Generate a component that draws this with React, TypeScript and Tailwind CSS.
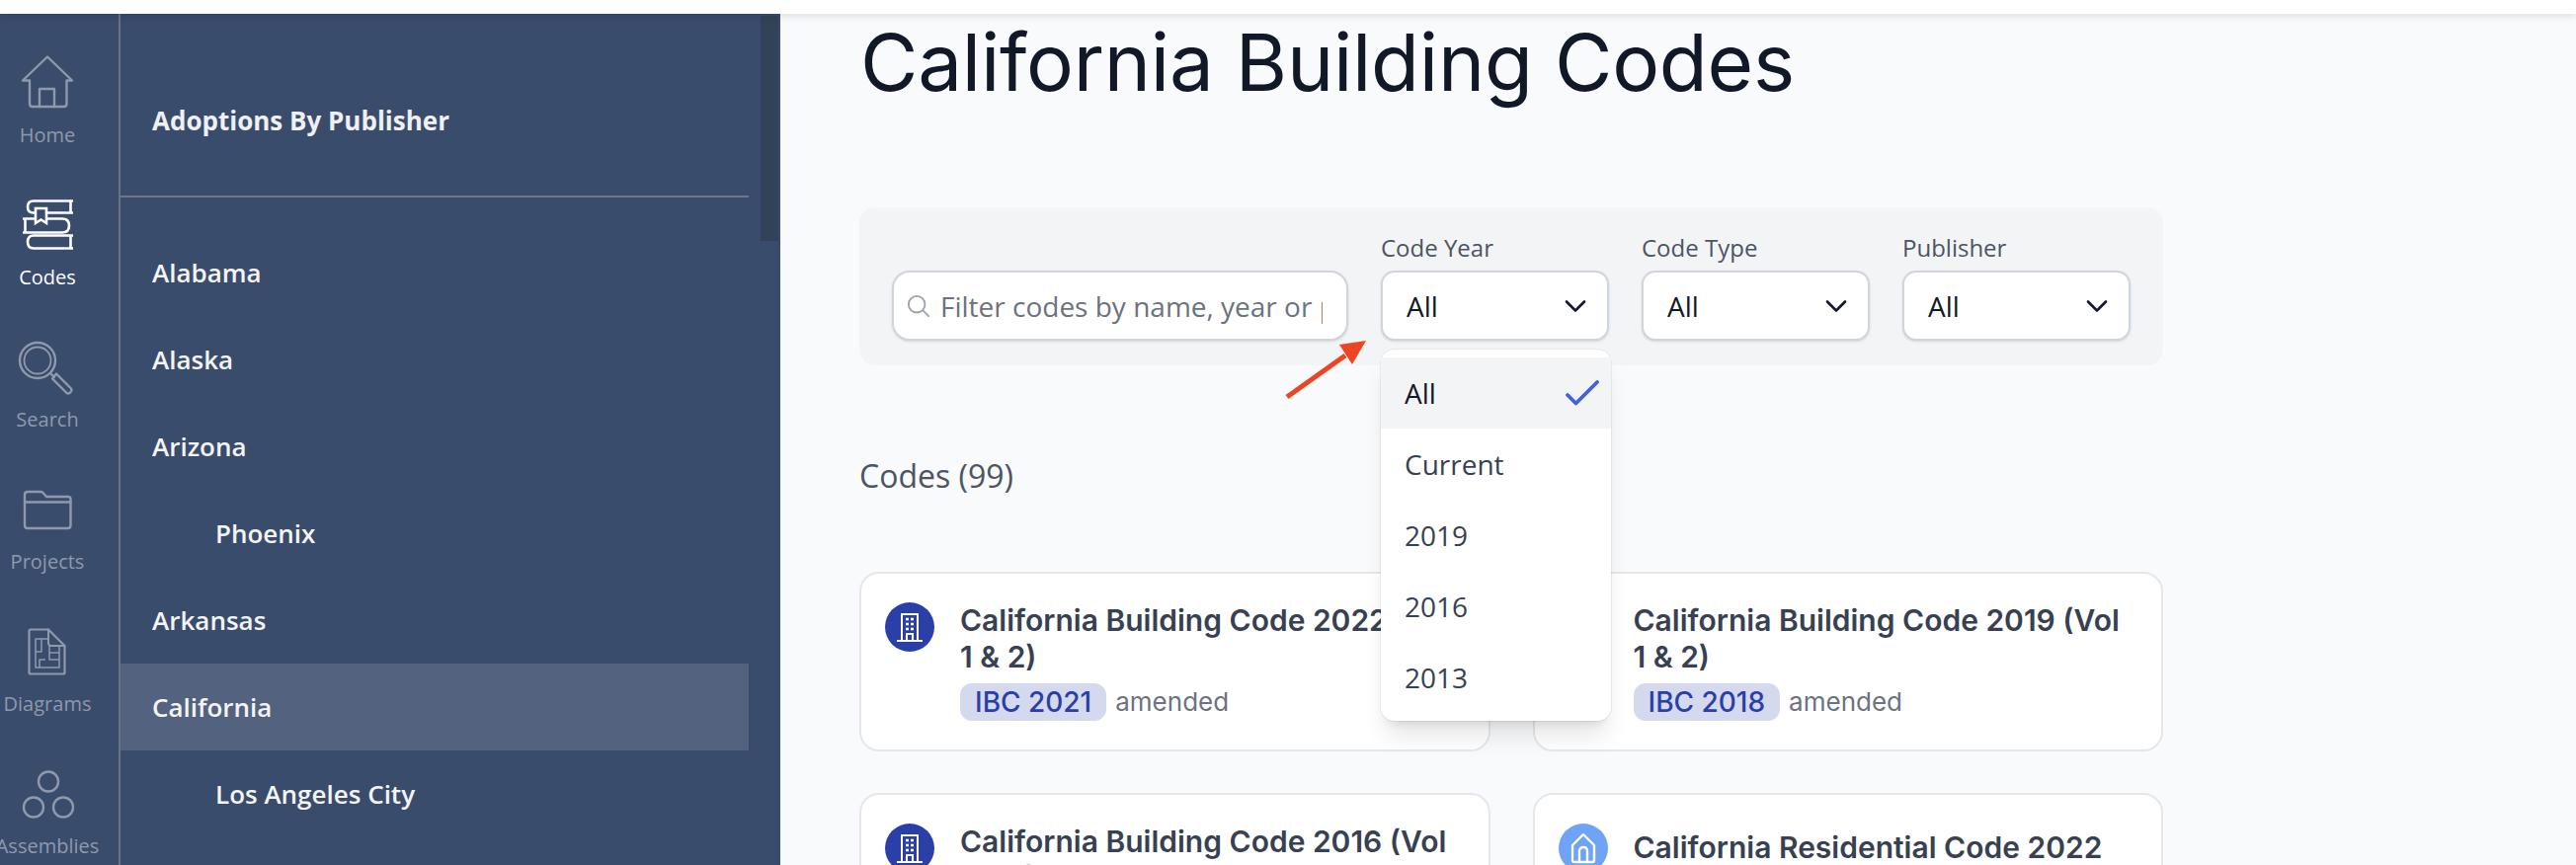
import React from "react";

const sans = "font-['Open_Sans',sans-serif]";
const inter = "font-['Inter',sans-serif]";

function RailIcon({ name, active }: { name: string; active?: boolean }) {
  const c = active ? "#ffffff" : "#8e99ad";
  const common = { fill: "none", stroke: c, strokeLinecap: "round" as const, strokeLinejoin: "round" as const };
  if (name === "Home")
    return (
      <svg width="60" height="60" viewBox="18 54 60 60" {...common} strokeWidth="2.4">
        <path d="M23 81.5 48 57.5 73 81.5H67.5V105q0 3-3 3H33q-3 0-3-3V81.5Z" />
        <path d="M40 108V90h15v18" />
      </svg>
    );
  if (name === "Codes")
    return (
      <svg width="60" height="60" viewBox="18 198 60 60" {...common} strokeWidth="2.6" strokeLinecap="butt" strokeLinejoin="miter">
        <path d="M74 203.5H34q-6 0-6 6t6 6H74M71.5 203.5v12" />
        <path d="M23 221.5H63q7 0 7 7t-7 7H23M25.5 221.5v14" />
        <path d="M74 238.5H34q-6 0-6 6.5t6 6.5H74M71.5 238.5v13" />
        <path d="M36 211h11v15l-5.500-3.500L36 226Z" fill="#3a4c6b" />
      </svg>
    );
  if (name === "Search")
    return (
      <svg width="60" height="60" viewBox="18 342 60 60" {...common} strokeWidth="2.4">
        <circle cx="38" cy="365" r="18" />
        <circle cx="38" cy="365" r="13.500" strokeWidth="1.800" />
        <path d="M51 378l4 4" />
        <path d="M57 378.500 72 393.500q1 1.500 0 3l-1.500 1.500q-1.500 1-3 0L53 383.500Z" />
      </svg>
    );
  if (name === "Projects")
    return (
      <svg width="60" height="60" viewBox="18 486 60 60" {...common} strokeWidth="2.4">
        <path d="M25 501q0-3 3-3H41q2 0 3 1.500L47 503H69q2.500 0 2.500 2.500V532q0 3-3 3H28q-3 0-3-3Z" />
        <path d="M25 508.500H71.500" />
      </svg>
    );
  if (name === "Diagrams")
    return (
      <svg width="60" height="60" viewBox="18 630 60 60" {...common} strokeWidth="2.2">
        <path d="M29.500 639q0-1.500 1.500-1.500H49L65.500 654V681q0 1.500-1.500 1.500H31q-1.500 0-1.500-1.500Z" />
        <path d="M49 637.500V651q0 3 3 3H65.500" strokeWidth="2" />
        <path d="M49 647H36V676H60V655M42 647V654M36 660H42V654M50 654V668H60M50 661H60M40 676V668H46" strokeWidth="1.500" strokeLinecap="butt" />
      </svg>
    );
  return (
    <svg width="60" height="60" viewBox="18 774 60 60" {...common} strokeWidth="2.4">
      <circle cx="49" cy="791.500" r="10" />
      <circle cx="34" cy="817.500" r="10" />
      <circle cx="64" cy="817.500" r="10" />
    </svg>
  );
}

const railItems: { n: string; active?: boolean }[] = [
  { n: "Home" },
  { n: "Codes", active: true },
  { n: "Search" },
  { n: "Projects" },
  { n: "Diagrams" },
  { n: "Assemblies" },
];

function Rail() {
  return (
    <div className="w-[122px] shrink-0 border-r-2 border-[#697386] bg-[#3a4c6b] overflow-hidden">
      <div className="w-[96px] flex flex-col">
        {railItems.map((it) => (
          <div key={it.n} className="h-[144px] shrink-0 flex flex-col items-center justify-end">
            <RailIcon name={it.n} active={it.active} />
            <div className={`${sans} mt-[9px] mb-[7px] h-[28px] leading-[28px] text-[20px] whitespace-nowrap ${it.active ? "text-white" : "text-[#8e99ad]"}`}>
              {it.n}
            </div>
          </div>
        ))}
      </div>
    </div>
  );
}

const states: { t: string; sub?: boolean; sel?: boolean }[] = [
  { t: "Alabama" },
  { t: "Alaska" },
  { t: "Arizona" },
  { t: "Phoenix", sub: true },
  { t: "Arkansas" },
  { t: "California", sel: true },
  { t: "Los Angeles City", sub: true },
];

function Sidebar() {
  return (
    <div className="w-[668px] shrink-0 bg-[#3a4c6b] flex overflow-hidden">
      <div className="w-[636px] shrink-0">
        <div className={`${sans} h-[186px] border-b-2 border-[#6f7789] pl-[32px] flex items-start pt-[90px] text-[26px] leading-[36px] font-bold text-[#eef0f4]`}>
          Adoptions By Publisher
        </div>
        <div className="pt-[32px]">
          {states.map((s) => (
            <div
              key={s.t}
              className={`${sans} h-[88px] flex items-center text-[26px] font-semibold text-[#f3f4f6] ${s.sub ? "pl-[96px]" : "pl-[32px]"} ${s.sel ? "bg-[#53637f]" : ""}`}
            >
              {s.t}
            </div>
          ))}
        </div>
      </div>
      <div className="ml-[12px] mt-[2px] w-[18px] h-[228px] bg-[#324259]" />
    </div>
  );
}

function Chevron() {
  return (
    <svg width="22" height="14" viewBox="0 0 22 14" fill="none" stroke="#111827" strokeWidth="2.600" strokeLinecap="round" strokeLinejoin="round">
      <path d="M2 2.500 11 11.500 20 2.500" />
    </svg>
  );
}

function Select({ label, value, children }: { label: string; value: string; children?: React.ReactNode }) {
  return (
    <div className="w-[231px] relative">
      <div className={`${sans} text-[24px] leading-[30px] font-medium text-[#4b5563] mb-[8px]`}>{label}</div>
      <div className={`${sans} h-[71px] rounded-[14px] bg-white border-2 border-[#d1d5db] shadow-sm flex items-center justify-between pl-[24px] pr-[21px] text-[28px] text-[#111827]`}>
        <span>{value}</span>
        <Chevron />
      </div>
      {children}
    </div>
  );
}

function Dropdown() {
  const opts = ["Current", "2019", "2016", "2013"];
  return (
    <div className={`${sans} absolute z-20 left-0 top-[118px] w-[233px] rounded-[14px] bg-white py-[8px] shadow-[0_20px_25px_-5px_rgba(0,0,0,0.1),0_8px_10px_-6px_rgba(0,0,0,0.1),0_0_0_1px_rgba(0,0,0,0.05)]`}>
      <div className="h-[72px] bg-[#f3f4f6] flex items-center justify-between pl-[24px] pr-[12px] text-[28px] font-medium text-[#111827]">
        <span>All</span>
        <svg width="34" height="26" viewBox="0 0 34 26" fill="none" stroke="#4361d8" strokeWidth="3.800" strokeLinecap="round" strokeLinejoin="round">
          <path d="M2 15 10.500 23.500 32 2" />
        </svg>
      </div>
      {opts.map((o) => (
        <div key={o} className="h-[72px] flex items-center pl-[24px] text-[28px] text-[#374151]">
          {o}
        </div>
      ))}
    </div>
  );
}

function Building() {
  return (
    <div className="w-[50px] h-[50px] rounded-full bg-[#2a3fa8] shrink-0 flex items-center justify-center">
      <svg width="30" height="32" viewBox="0 0 30 32" fill="none" stroke="#fff" strokeWidth="2">
        <path d="M7 30V3h16v27M2 30h26M12 30v-7h6v7" />
        <path d="M11 8h3M16 8h3M11 13h3M16 13h3M11 18h3M16 18h3" strokeWidth="2.400" />
      </svg>
    </div>
  );
}

function HouseBadge() {
  return (
    <div className="w-[50px] h-[50px] rounded-full bg-[#6ea3f5] shrink-0 flex items-center justify-center">
      <svg width="28" height="32" viewBox="0 0 28 32" fill="none" stroke="#fff" strokeWidth="2.400" strokeLinejoin="round">
        <path d="M3 13 14 2l11 11v15q0 2-2 2H5q-2 0-2-2Z" />
        <path d="M10 30V19q0-4 4-4t4 4v11" />
      </svg>
    </div>
  );
}

function Card({ title, badge, icon, nudge }: { title: string; badge?: string; icon: React.ReactNode; nudge?: boolean }) {
  return (
    <div className="h-[182px] rounded-[20px] bg-white border-2 border-[#e5e7eb] pl-[24px] pr-[30px] pt-[29px] flex gap-[26px]">
      {icon}
      <div className={`min-w-0 ${nudge ? "pt-[6px]" : ""}`}>
        <div className={`${inter} text-[30px] leading-[37px] font-semibold text-[#374151]`}>{title}</div>
        {badge && (
          <div className="flex items-center gap-[9px] mt-[8px]">
            <span className={`${inter} h-[38px] px-[15px] rounded-[12px] bg-[#d4d9ee] text-[#2a3fa8] text-[28px] leading-[38px] font-medium`}>{badge}</span>
            <span className={`${inter} text-[26px] leading-[38px] text-[#6b7280]`}>amended</span>
          </div>
        )}
      </div>
    </div>
  );
}

function Arrow() {
  return (
    <svg className="absolute z-30 left-[-98px] top-[106px]" width="90" height="66" viewBox="0 0 90 66" fill="none">
      <path d="M3 60 62 18" stroke="#ee4423" strokeWidth="5" />
      <path d="M83 3 56 7 69 27Z" fill="#ee4423" />
    </svg>
  );
}

export default function App() {
  return (
    <div className="w-[2608px] h-[876px] overflow-hidden flex flex-col bg-[#f9fafb]">
      <div className="h-[14px] shrink-0 bg-white relative z-10 shadow-[0_2px_8px_rgba(0,0,0,0.12)]" />
      <div className="flex flex-1 min-h-0">
        <Rail />
        <Sidebar />
        <div className="flex-1 pl-[80px] min-w-0">
          <div className="w-[1320px]">
            <h1 className={`${inter} pl-[1px] pt-[1px] h-[96px] text-[80px] leading-[96px] tracking-[-0.27px] font-normal text-[#111827]`}>California Building Codes</h1>
            <div className="mt-[100px] h-[160px] rounded-[16px] bg-[#f3f4f6] px-[33px] pb-[25px] flex items-end gap-[33px]">
              <div className="w-[462px] h-[71px] rounded-[18px] bg-white border-2 border-[#d1d5db] flex items-center pl-[13px] pr-[24px] gap-[10px] shadow-sm">
                <svg width="24" height="24" viewBox="0 0 26 26" fill="none" stroke="#9ca3af" strokeWidth="2" strokeLinecap="round" className="shrink-0">
                  <circle cx="11" cy="11" r="9" />
                  <path d="M18 18l6 6" />
                </svg>
                <input
                  readOnly
                  placeholder="Filter codes by name, year or publisher"
                  className={`${sans} flex-1 min-w-0 outline-none bg-transparent text-[28px] placeholder:text-[#6b7280]`}
                />
              </div>
              <Select label="Code Year" value="All">
                <Arrow />
                <Dropdown />
              </Select>
              <Select label="Code Type" value="All" />
              <Select label="Publisher" value="All" />
            </div>
            <div className={`${sans} mt-[92px] text-[32px] leading-[40px] text-[#4b5563]`}>Codes (99)</div>
            <div className="mt-[77px] grid grid-cols-2 gap-x-[43px] gap-y-[42px]">
              <Card title="California Building Code 2022 (Vol 1 & 2)" badge="IBC 2021" icon={<Building />} />
              <Card title="California Building Code 2019 (Vol 1 & 2)" badge="IBC 2018" icon={<Building />} />
              <Card title="California Building Code 2016 (Vol 1 & 2)" badge="IBC 2015" icon={<Building />} />
              <Card title="California Residential Code 2022" badge="IRC 2021" icon={<HouseBadge />} nudge />
            </div>
          </div>
        </div>
      </div>
    </div>
  );
}
